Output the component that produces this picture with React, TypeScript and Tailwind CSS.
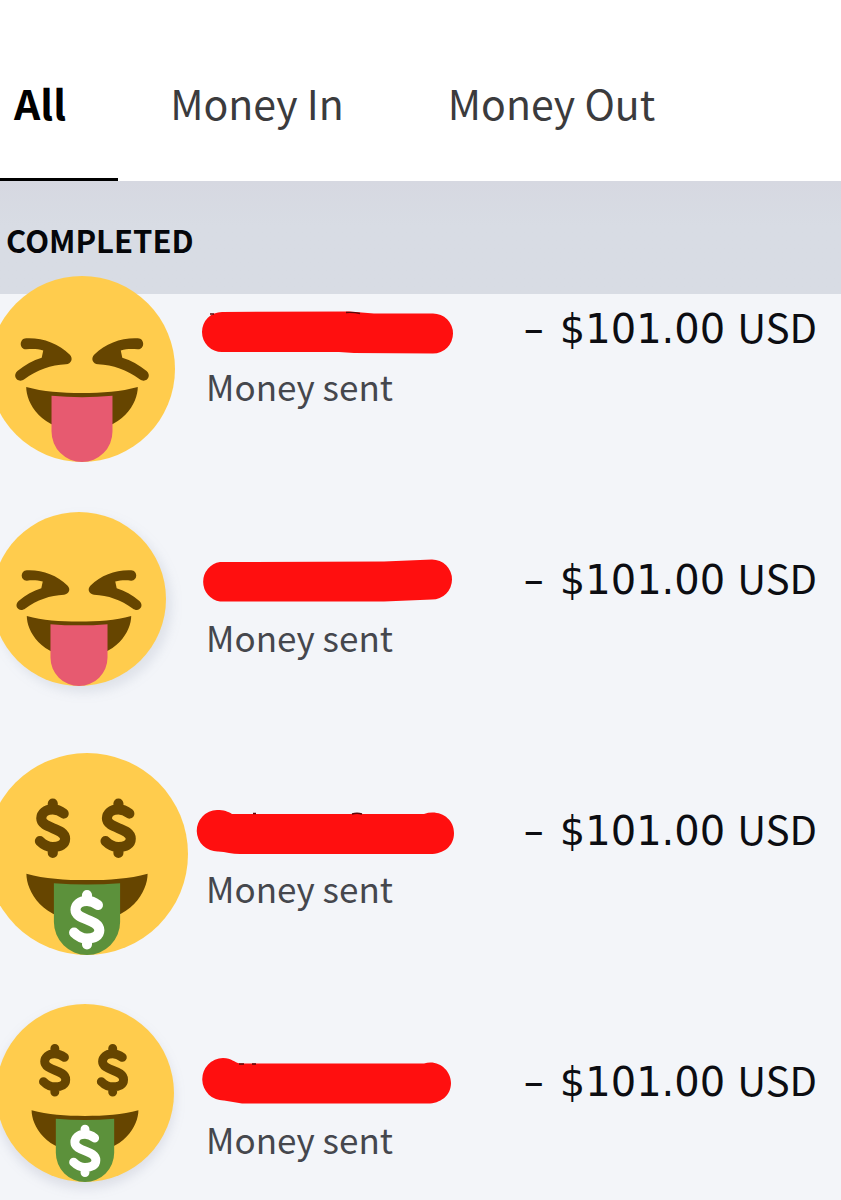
import { useState } from 'react';
import clsx from 'clsx';

type Transaction = {
    id: number;
    status: string;
    amount: string;
    currency: string;
    face: 'tongue' | 'money';
    facePlace: string;
    marker: string;
    specks?: string;
};

const tabs = ['All', 'Money In', 'Money Out'];

const transactions: Transaction[] = [
    {
        id: 1,
        status: 'Money sent',
        amount: '$101.00',
        currency: 'USD',
        face: 'tongue',
        facePlace: '-left-[11px] -top-[18px] size-[186px]',
        marker: 'M28 4 L155 3.5 L180 5.5 H239 A20 20 0 0 1 239 45.5 L160 45 L145 44 H28 A20 20 0 0 1 28 4Z',
        specks: 'M16 6h4M152 4.5q8-.5 14 1',
    },
    {
        id: 2,
        status: 'Money sent',
        amount: '$101.00',
        currency: 'USD',
        face: 'tongue',
        facePlace: '-left-[8px] -top-[33px] size-[174px] drop-shadow-[5px_6px_6px_rgba(80,90,120,0.13)]',
        marker: 'M26 3 L190 2.5 L238 .5 A20 20 0 0 1 238 40.5 L190 42.5 H26 A20 20 0 0 1 26 3Z',
    },
    {
        id: 3,
        status: 'Money sent',
        amount: '$101.00',
        currency: 'USD',
        face: 'money',
        facePlace: '-left-[14px] -top-[43px] size-[202px]',
        marker: 'M23 0 C30 0 34 1.5 38 4 H230 C245 -1 260 8 260 23 C260 36 250 44 236 44 H46 C38 44 32 42 24 41.5 A20.5 20.5 0 0 1 23 0Z',
        specks: 'M59 3.5h3M158 4q5-1.5 10 0',
    },
    {
        id: 4,
        status: 'Money sent',
        amount: '$101.00',
        currency: 'USD',
        face: 'money',
        facePlace: '-left-[4px] -top-[43px] size-[178px] drop-shadow-[0_6px_6px_rgba(80,90,120,0.15)]',
        marker: 'M29 -3 C38 -3 40 1.5 46 2.5 H230 C244 -2 257 9 257 22 C257 35 246 42.5 234 42.5 H48 L30 39.5 A21 21 0 0 1 29 -3Z',
        specks: 'M45 3h5M58 3h4',
    },
];

const dollar =
    'M1.95-2.6C1.3-3.1.7-3.35 0-3.35-1.3-3.35-2.05-2.6-2.05-1.75-2.05.2 2.2-.2 2.2 1.9 2.2 2.9 1.3 3.35 0 3.35-1 3.35-1.7 2.9-2.3 2.3M0-4.4V-3.4M0 3.4V4.4';

const squint =
    'M7.2 12.05C10.3 11.9 13.4 13 15.6 15.2 16.4 16 15.9 17 14.9 17.1 12 17.2 9.3 18.2 6.9 19.95 5.6 20.9 4.4 19.4 5.5 18.4 7 17.2 8.5 16.3 10.2 15.8L10.5 14.4C9.4 14.1 8.4 14.1 7.2 14.2 5.8 14.2 5.8 12.1 7.2 12.05Z';

function Face({ kind, className }: { kind: 'tongue' | 'money'; className: string }) {
    return (
        <svg viewBox="0 0 36 36" className={clsx('absolute max-w-none', className)} aria-hidden="true">
            <circle cx="18" cy="18" r="18" fill="#FFCC4D" />
            <path d="M7.2 21.5C10.5 22.4 14 22.65 18 22.65S25.5 22.4 28.8 21.5C28.8 24.5 26 30 18 30S7.2 24.5 7.2 21.5Z" fill="#664500" />
            <path d="M12.1 23.2Q18 23.7 23.9 23.2V30.1A5.9 5.9 0 0 1 12.1 30.1Z" fill={kind === 'money' ? '#5C913B' : '#E75A70'} />
            {kind === 'tongue' ? (
                <g fill="#664500">
                    <path d={squint} />
                    <path d={squint} transform="matrix(-1 0 0 1 36 0)" />
                </g>
            ) : (
                <g fill="none" strokeWidth="1.8" strokeLinecap="round" strokeLinejoin="round">
                    <path d={dollar} transform="translate(11.9 13.4)" stroke="#664500" />
                    <path d={dollar} transform="translate(23.6 13.4)" stroke="#664500" />
                    <path d={dollar} transform="translate(18 29.7)" stroke="#FFFFFF" />
                </g>
            )}
        </svg>
    );
}

function TransactionRow({ item }: { item: Transaction }) {
    return (
        <li className="relative flex h-[153px] items-start justify-between pl-[194px] pr-6">
            <Face kind={item.face} className={item.facePlace} />
            <div className="pt-3.5">
                <svg viewBox="0 0 264 48" className="h-12 w-[264px] overflow-visible" aria-hidden="true">
                    <path d={item.marker} fill="#FF0F0F" />
                    {item.specks && <path d={item.specks} fill="none" stroke="#5A0808" strokeWidth="1.5" />}
                </svg>
                <p className="mt-1.5 pl-3 text-[35px] leading-[48px] text-[#45474d]">{item.status}</p>
            </div>
            <p className="flex items-baseline whitespace-nowrap pt-1.5 text-[40px] leading-[52px] text-[#0c0d12]">
                <span className="pr-4 font-['DejaVu_Sans',sans-serif]">–</span>
                <span className="pr-3 font-['DejaVu_Sans',sans-serif]">{item.amount}</span>
                <span>{item.currency}</span>
            </p>
        </li>
    );
}

export default function App() {
    const [active, setActive] = useState('All');

    return (
        <main className="min-h-screen overflow-hidden bg-[#f3f5f9] font-['Noto_Sans_CJK_SC','Noto_Sans',sans-serif]">
            <nav className="flex bg-white pt-[58px] text-[41px] leading-[60px]">
                {tabs.map(tab => (
                    <button
                        key={tab}
                        type="button"
                        onClick={() => setActive(tab)}
                        className={clsx(
                            'h-[123px] whitespace-nowrap border-b-[3px] pb-8 pl-3.5 pr-[52px] not-first:pl-[52px]',
                            active === tab ? 'border-black font-bold text-black' : 'border-transparent text-[#3b3b3d]'
                        )}
                    >
                        {tab}
                    </button>
                ))}
            </nav>

            <section>
                <h2 className="h-[113px] bg-linear-to-b from-[#d6d8e1] to-[#d8dce4] to-40% pl-1.5 pt-[35px] text-[31px] font-bold leading-[48px] text-[#06070a]">
                    COMPLETED
                </h2>
                <ul className="flex flex-col gap-[98px]">
                    {transactions.map(item => (
                        <TransactionRow key={item.id} item={item} />
                    ))}
                </ul>
            </section>
        </main>
    );
}
